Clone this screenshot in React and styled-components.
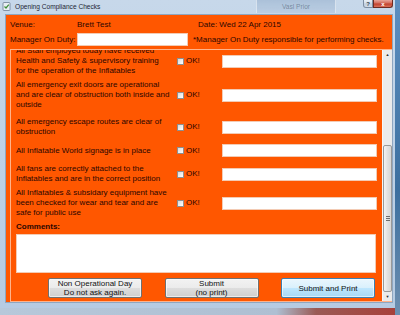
import React from 'react';
import styled, { createGlobalStyle } from 'styled-components';

const GlobalStyle = createGlobalStyle`
  html, body {
    margin: 0;
    padding: 0;
  }
  body {
    width: 400px;
    height: 315px;
    overflow: hidden;
    font-family: "Liberation Sans", Arial, sans-serif;
  }
`;

const ink = '#2b0600';
const orange = '#ff5700';

const Desktop = styled.div`
  display: grid;
  grid-template-columns: 395px 5px;
  grid-template-rows: 308px 7px;
  width: 400px;
  height: 315px;
  background: linear-gradient(180deg, #5d8fc0 0%, #3c6f9f 60%, #6d8fb0 100%);
`;

const BottomStrip = styled.div`
  grid-column: 1;
  grid-row: 2;
  background: linear-gradient(90deg, #b7c8da 0%, #aebfd2 70%, #9a5a55 80%, #a8403a 100%);
`;

const Window = styled.div`
  grid-column: 1;
  grid-row: 1;
  display: flex;
  flex-direction: column;
  padding: 0 2px 5px 5px;
  background: linear-gradient(180deg, #c7d8ea 0%, #bdd1e6 50%, #b6cbe2 100%);
`;

const TitleBar = styled.div`
  display: flex;
  align-items: center;
  height: 14px;
  margin-left: -3px;
  padding-bottom: 1px;
  box-sizing: border-box;
`;

const TitleText = styled.span`
  margin-left: 4px;
  font-family: "Liberation Sans", Arial, sans-serif;
  font-size: 6.6px;
  color: #1d2633;
`;

const Ghost = styled.div`
  display: flex;
  align-items: center;
  justify-content: center;
  align-self: stretch;
  width: 78px;
  margin: 0 27px 0 auto;
  background: linear-gradient(180deg, rgba(120, 150, 185, 0.35), rgba(150, 175, 205, 0.25));
  border-left: 1px solid rgba(255, 255, 255, 0.5);
  border-right: 1px solid rgba(255, 255, 255, 0.5);
  font-size: 6.6px;
  color: rgba(40, 55, 75, 0.45);
`;

const CaptionButton = styled.div`
  display: flex;
  align-items: center;
  justify-content: center;
  align-self: flex-start;
  width: ${({ w }) => w}px;
  height: 8px;
  margin-top: 0;
  box-sizing: border-box;
  border: 1px solid ${({ close }) => (close ? '#6e2b22' : '#7d8ea2')};
  border-top: none;
  border-radius: 0 0 ${({ close }) => (close ? '3px 0' : '0 3px')};
  background: ${({ close }) =>
    close
      ? 'linear-gradient(180deg, #e7a59a 0%, #d56b5b 45%, #c2412c 55%, #d8705c 100%)'
      : 'linear-gradient(180deg, #e9f0f7 0%, #d4dfeb 45%, #c1cfde 55%, #d2dde9 100%)'};
  color: ${({ close }) => (close ? '#fff' : '#33404f')};
  font-size: 6px;
  font-weight: bold;
  line-height: 6px;
`;

const Client = styled.div`
  flex: 1;
  display: flex;
  flex-direction: column;
  min-height: 0;
  padding: 5px 0 0 4px;
  background: ${orange};
  border: 1px solid #8ea6c0;
  color: ${ink};
  font-size: 8px;
`;

const HeaderRow = styled.div`
  display: flex;
  align-items: center;
  margin-top: ${({ space }) => space || 0}px;
  line-height: 10px;
  white-space: nowrap;
`;

const Label = styled.span`
  width: ${({ w }) => w}px;
  flex: none;
`;

const Field = styled.div`
  width: ${({ w }) => w}px;
  height: ${({ h }) => h}px;
  flex: none;
  box-sizing: border-box;
  background: #fff;
  border: 1px solid #f3cbb4;
`;

const Note = styled.span`
  margin-left: 5px;
`;

const Panel = styled.div`
  flex: 1;
  display: flex;
  min-height: 0;
  margin-top: 3px;
  border: 1px solid rgba(255, 210, 185, 0.75);
  border-right: none;
`;

const Viewport = styled.div`
  flex: 1;
  display: flex;
  flex-direction: column;
  justify-content: flex-end;
  overflow: hidden;
  padding: 0 0 3px 5px;
`;

const CheckRow = styled.div`
  display: flex;
  align-items: center;
  flex: none;
  margin-top: ${({ space }) => space}px;
`;

const CheckText = styled.div`
  width: 161px;
  flex: none;
  line-height: 10px;
`;

const Ok = styled.label`
  display: flex;
  align-items: center;
  gap: 2px;
  width: 45px;
  flex: none;
  line-height: 10px;
`;

const Box = styled.span`
  width: 7px;
  height: 7px;
  box-sizing: border-box;
  border: 1px solid #8f8f8f;
  background: linear-gradient(135deg, #d8d8d8 0%, #f4f4f4 70%, #ffffff 100%);
`;

const CommentsLabel = styled.div`
  flex: none;
  margin-top: 4px;
  line-height: 10px;
  font-weight: bold;
`;

const ButtonRow = styled.div`
  display: flex;
  flex: none;
  gap: 22.5px;
  margin-top: 5px;
  padding-left: 32px;
`;

const Button = styled.div`
  display: flex;
  flex-direction: column;
  align-items: center;
  justify-content: center;
  width: 94px;
  height: 20px;
  box-sizing: border-box;
  border: 1px solid ${({ primary }) => (primary ? '#3c7fb1' : '#707070')};
  border-radius: 2px;
  background: ${({ primary }) =>
    primary
      ? 'linear-gradient(180deg, #eaf6fd 0%, #d9f0fc 50%, #bee6fd 51%, #a7d9f5 100%)'
      : 'linear-gradient(180deg, #f2f2f2 0%, #ebebeb 50%, #dddddd 51%, #cfcfcf 100%)'};
  box-shadow: inset 0 0 0 1px rgba(255, 255, 255, 0.6);
  color: #111;
  font-size: 8px;
  line-height: 9px;
  text-align: center;
`;

const ScrollBar = styled.div`
  display: flex;
  flex-direction: column;
  width: 10px;
  flex: none;
  background: #ebebeb;
  border-left: 1px solid #f7f7f7;
  box-sizing: border-box;
`;

const Arrow = styled.div`
  display: flex;
  align-items: center;
  justify-content: center;
  height: 9px;
  flex: none;
  color: #303030;
  font-size: 4px;
  line-height: 4px;
`;

const Track = styled.div`
  flex: 1;
  display: flex;
  flex-direction: column;
  justify-content: flex-end;
`;

const Thumb = styled.div`
  display: flex;
  flex-direction: column;
  align-items: center;
  justify-content: center;
  gap: 1px;
  height: 147px;
  box-sizing: border-box;
  border: 1px solid #999;
  border-radius: 2px;
  background: linear-gradient(90deg, #f3f3f3 0%, #e2e2e2 50%, #d6d6d6 100%);
`;

const Grip = styled.span`
  width: 4px;
  height: 1px;
  background: #6d6d6d;
`;

const checks = [
  {
    space: 0,
    lines: [
      'All Staff employed today have received',
      'Health and Safety & supervisory training',
      'for the operation of the Inflatables',
    ],
  },
  {
    space: 4,
    lines: [
      'All emergency exit doors are operational',
      'and are clear of obstruction both inside and',
      'outside',
    ],
  },
  { space: 7, lines: ['All emergency escape routes are clear of', 'obstruction'] },
  { space: 7, lines: ['All Inflatable World signage is in place'] },
  { space: 7, lines: ['All fans are correctly attached to the', 'Inflatables and are in the correct position'] },
  {
    space: 4,
    lines: [
      'All Inflatables & subsidary equipment have',
      'been checked for wear and tear and are',
      'safe for public use',
    ],
  },
];

const AppIcon = () => (
  <svg width="9" height="9" viewBox="0 0 9 9">
    <rect x="1" y="0.5" width="7" height="8" rx="1" fill="#e9eef4" stroke="#6d7f94" strokeWidth="0.8" />
    <path d="M2.5 4.5 L4 6 L6.8 2.6" fill="none" stroke="#3f8f3a" strokeWidth="1.2" />
  </svg>
);

const CheckItem = ({ lines, space }) => (
  <CheckRow space={space}>
    <CheckText>
      {lines.map((line) => (
        <div key={line}>{line}</div>
      ))}
    </CheckText>
    <Ok>
      <Box />
      OK!
    </Ok>
    <Field w={155} h={13} />
  </CheckRow>
);

const App = () => (
  <>
    <GlobalStyle />
    <Desktop>
      <Window>
        <TitleBar>
          <AppIcon />
          <TitleText>Opening Compliance Checks</TitleText>
          <Ghost>Vasl Prior</Ghost>
          <CaptionButton w={10}>?</CaptionButton>
          <CaptionButton w={20} close>
            x
          </CaptionButton>
        </TitleBar>
        <Client>
          <HeaderRow>
            <Label w={67}>Venue:</Label>
            <Label w={121}>Brett Test</Label>
            <span>Date: Wed 22 Apr 2015</span>
          </HeaderRow>
          <HeaderRow space={3}>
            <Label w={67}>Manager On Duty:</Label>
            <Field w={111} h={13} />
            <Note>*Manager On Duty responsible for performing checks.</Note>
          </HeaderRow>
          <Panel>
            <Viewport>
              {checks.map((c) => (
                <CheckItem key={c.lines[0]} lines={c.lines} space={c.space} />
              ))}
              <CommentsLabel>Comments:</CommentsLabel>
              <Field w={360} h={39} style={{ marginTop: 2, flex: 'none' }} />
              <ButtonRow>
                <Button>
                  <span>Non Operational Day</span>
                  <span>Do not ask again.</span>
                </Button>
                <Button>
                  <span>Submit</span>
                  <span>(no print)</span>
                </Button>
                <Button primary>Submit and Print</Button>
              </ButtonRow>
            </Viewport>
            <ScrollBar>
              <Arrow>▲</Arrow>
              <Track>
                <Thumb>
                  <Grip />
                  <Grip />
                  <Grip />
                </Thumb>
              </Track>
              <Arrow>▼</Arrow>
            </ScrollBar>
          </Panel>
        </Client>
      </Window>
      <BottomStrip />
    </Desktop>
  </>
);

export default App;
